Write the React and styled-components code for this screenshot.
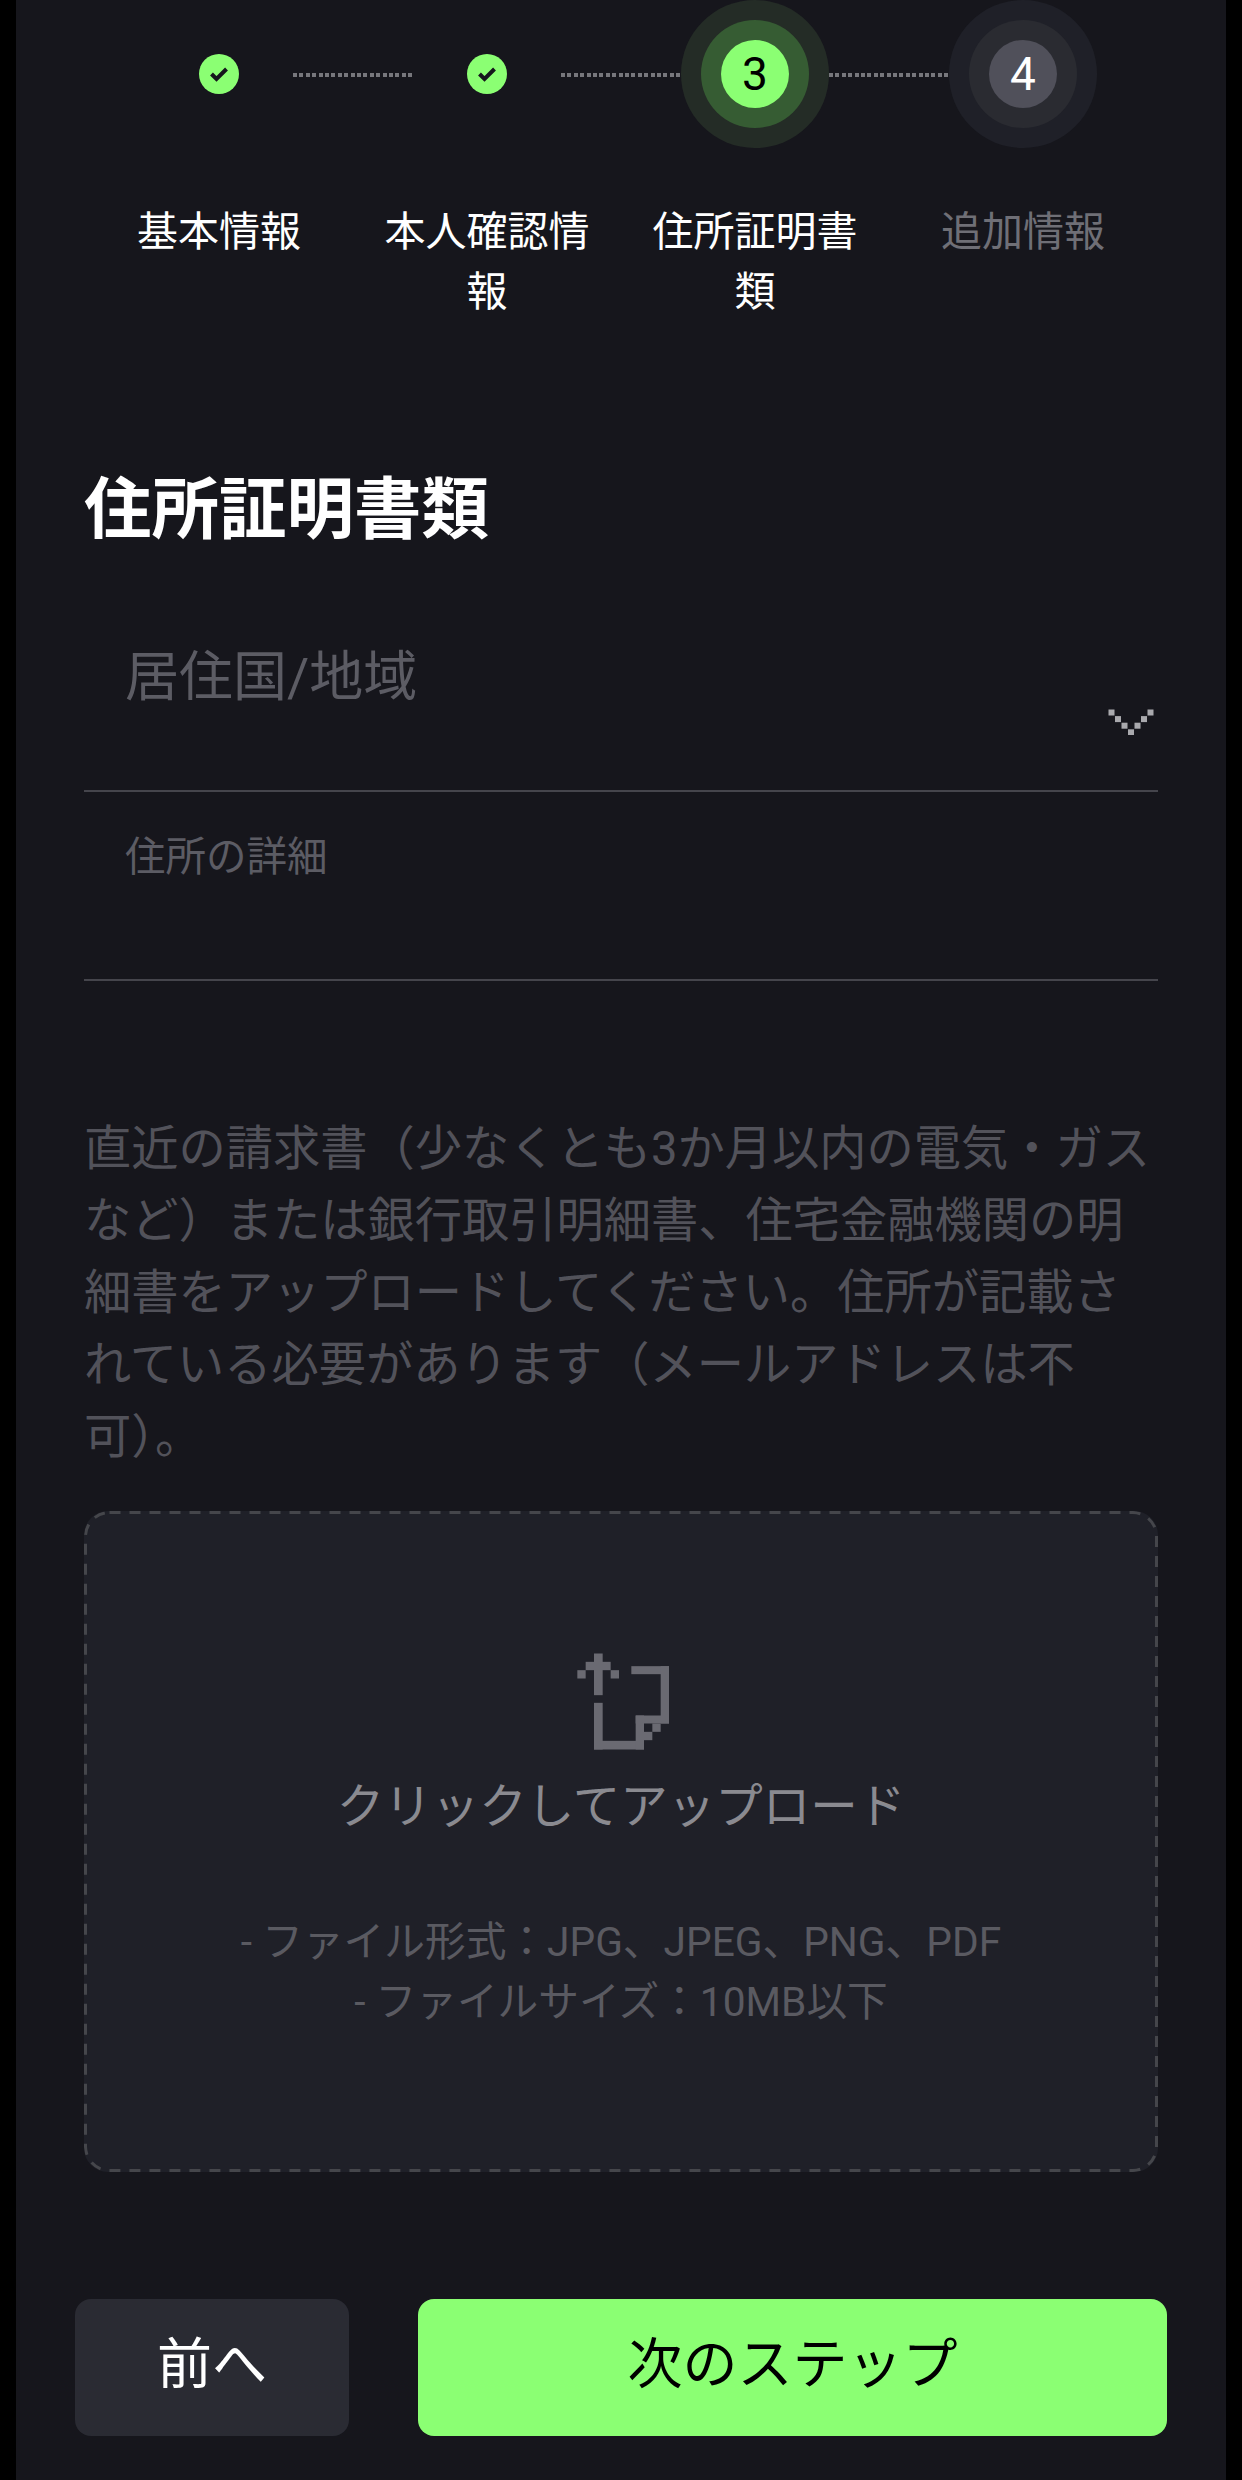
import React from 'react';
import styled, { createGlobalStyle } from 'styled-components';

const GlobalStyle = createGlobalStyle`
  html, body {
    margin: 0;
    background: #000;
  }
  * {
    box-sizing: border-box;
  }
`;

const steps = [
  { label: '基本情報', state: 'done' },
  { label: '本人確認情報', state: 'done' },
  { label: '住所証明書類', state: 'active', num: 3 },
  { label: '追加情報', state: 'todo', num: 4 },
];

const Page = styled.div`
  width: 1210px;
  height: 2480px;
  margin: 0 16px;
  overflow: hidden;
  background: #16161c;
  font-family: Roboto, "Noto Sans CJK JP", sans-serif;
  color: #fff;
`;

const StepTrack = styled.div`
  display: flex;
  align-items: center;
  padding-left: 129px;
`;

const StepSlot = styled.div`
  flex: 0 0 148px;
  height: 148px;
  display: flex;
  align-items: center;
  justify-content: center;
`;

const Connector = styled.div`
  flex: 0 0 120px;
  height: 4px;
  margin-top: 2px;
  background-image: repeating-linear-gradient(90deg, #77777c 0 4px, transparent 4px 6.4px);
`;

const DoneDot = styled.div`
  width: 40px;
  height: 40px;
  border-radius: 50%;
  background: #8bff73;
  display: flex;
  align-items: center;
  justify-content: center;
`;

const NumberDot = styled.div`
  width: 68px;
  height: 68px;
  border-radius: 50%;
  display: flex;
  align-items: center;
  justify-content: center;
  font-size: 46px;
  background: ${p => (p.$active ? '#8bff73' : '#50505a')};
  color: ${p => (p.$active ? '#000' : '#fff')};
  box-shadow: 0 0 0 20px ${p => (p.$active ? '#365c33' : '#2a2b31')},
    0 0 0 40px ${p => (p.$active ? '#242c26' : '#1f2028')};
`;

const StepLabels = styled.div`
  display: grid;
  grid-template-columns: repeat(4, 268px);
  padding-left: 69px;
  margin-top: 54px;
`;

const StepLabel = styled.div`
  padding: 0 24px;
  text-align: center;
  font-size: 41px;
  line-height: 60px;
  color: ${p => (p.$muted ? '#6f6f76' : '#fff')};
`;

const Form = styled.div`
  padding: 0 68px;
`;

const Title = styled.h1`
  margin: 145px 0 0;
  padding-top: 3px;
  height: 80px;
  font-size: 67.5px;
  line-height: 80px;
  font-weight: 700;
`;

const SelectField = styled.div`
  height: 245px;
  padding: 96px 4px 0 41px;
  display: flex;
  justify-content: space-between;
  align-items: flex-start;
  border-bottom: 2px solid #45454c;
`;

const SelectLabel = styled.div`
  font-size: 54px;
  line-height: 70px;
  color: #5c5c64;
`;

const Chevron = styled.svg`
  width: 46px;
  height: 26px;
  margin-top: 66px;
`;

const TextField = styled.div`
  height: 189px;
  padding: 37px 0 0 41px;
  border-bottom: 2px solid #45454c;
  font-size: 40.5px;
  line-height: 56px;
  color: #5c5c64;
`;

const Notice = styled.p`
  margin: 132px 0 0;
  height: 358px;
  font-size: 47.25px;
  line-height: 72px;
  color: #52525a;
`;

const DropZone = styled.div`
  margin-top: 40px;
  height: 661px;
  padding-top: 139px;
  display: flex;
  flex-direction: column;
  align-items: center;
  background-color: #1f2028;
  background-image: url("data:image/svg+xml,%3Csvg xmlns='http://www.w3.org/2000/svg' width='1074' height='661'%3E%3Crect x='1.5' y='1.5' width='1071' height='658' rx='24' fill='none' stroke='%2345464b' stroke-width='3' stroke-dasharray='11 9'/%3E%3C/svg%3E");
  border-radius: 24px;
`;

const UploadIcon = styled.svg`
  width: 98px;
  height: 103px;
  margin-left: 3px;
`;

const DropTitle = styled.div`
  margin-top: 22px;
  font-size: 47.5px;
  line-height: 64px;
  color: #8a8a90;
`;

const DropHint = styled.div`
  margin-top: 73px;
  text-align: center;
  font-size: 40.7px;
  line-height: 60px;
  color: #5a5a61;
`;

const Footer = styled.div`
  display: flex;
  gap: 69px;
  margin: 127px -9px 0;
`;

const Button = styled.button`
  flex: ${p => (p.$primary ? '1' : '0 0 274px')};
  height: 137px;
  padding: 0 0 18px;
  border: 0;
  border-radius: 16px;
  font-family: inherit;
  font-size: 55px;
  background: ${p => (p.$primary ? '#8bff73' : '#2a2b33')};
  color: ${p => (p.$primary ? '#000' : '#fff')};
`;

const CheckIcon = () => (
  <svg width="20" height="16" viewBox="0 0 20 16" fill="none">
    <path d="M2.5 8l5 5 10-10" stroke="#16161c" strokeWidth="4" />
  </svg>
);

const chevronSquares = [0, 1, 2, 3, 4, 5, 6];

const App = () => (
  <Page>
    <GlobalStyle />
    <StepTrack>
      {steps.map((s, i) => (
        <React.Fragment key={s.label}>
          {i > 0 && <Connector />}
          <StepSlot>
            {s.state === 'done' ? (
              <DoneDot><CheckIcon /></DoneDot>
            ) : (
              <NumberDot $active={s.state === 'active'}>{s.num}</NumberDot>
            )}
          </StepSlot>
        </React.Fragment>
      ))}
    </StepTrack>
    <StepLabels>
      {steps.map(s => (
        <StepLabel key={s.label} $muted={s.state === 'todo'}>{s.label}</StepLabel>
      ))}
    </StepLabels>
    <Form>
      <Title>住所証明書類</Title>
      <SelectField>
        <SelectLabel>居住国/地域</SelectLabel>
        <Chevron viewBox="0 0 46 26">
          {chevronSquares.map(i => (
            <rect key={i} x={0.5 + i * 6.5} y={0.5 + (3 - Math.abs(i - 3)) * 6.6} width="6" height="6" fill="#a9a9ad" />
          ))}
        </Chevron>
      </SelectField>
      <TextField>住所の詳細</TextField>
      <Notice>
        直近の請求書（少なくとも3か月以内の電気・ガスなど）または銀行取引明細書、住宅金融機関の明細書をアップロードしてください。住所が記載されている必要があります（メールアドレスは不可）。
      </Notice>
      <DropZone>
        <UploadIcon viewBox="100 100 294 308">
          <g fill="#6a6a72">
            <rect x="160" y="110" width="26" height="125" />
            <rect x="135" y="135" width="75" height="25" />
            <rect x="110" y="160" width="25" height="25" />
            <rect x="210" y="160" width="25" height="25" />
            <rect x="160" y="258" width="26" height="140" />
            <rect x="160" y="372" width="150" height="26" />
            <rect x="272" y="148" width="113" height="24" />
            <rect x="360" y="148" width="25" height="172" />
            <rect x="285" y="296" width="100" height="24" />
            <rect x="285" y="296" width="25" height="102" />
            <rect x="335" y="320" width="25" height="25" />
            <rect x="310" y="345" width="25" height="25" />
          </g>
        </UploadIcon>
        <DropTitle>クリックしてアップロード</DropTitle>
        <DropHint>
          - ファイル形式：JPG、JPEG、PNG、PDF
          <br />
          - ファイルサイズ：10MB以下
        </DropHint>
      </DropZone>
      <Footer>
        <Button>前へ</Button>
        <Button $primary>次のステップ</Button>
      </Footer>
    </Form>
  </Page>
);

export default App;
